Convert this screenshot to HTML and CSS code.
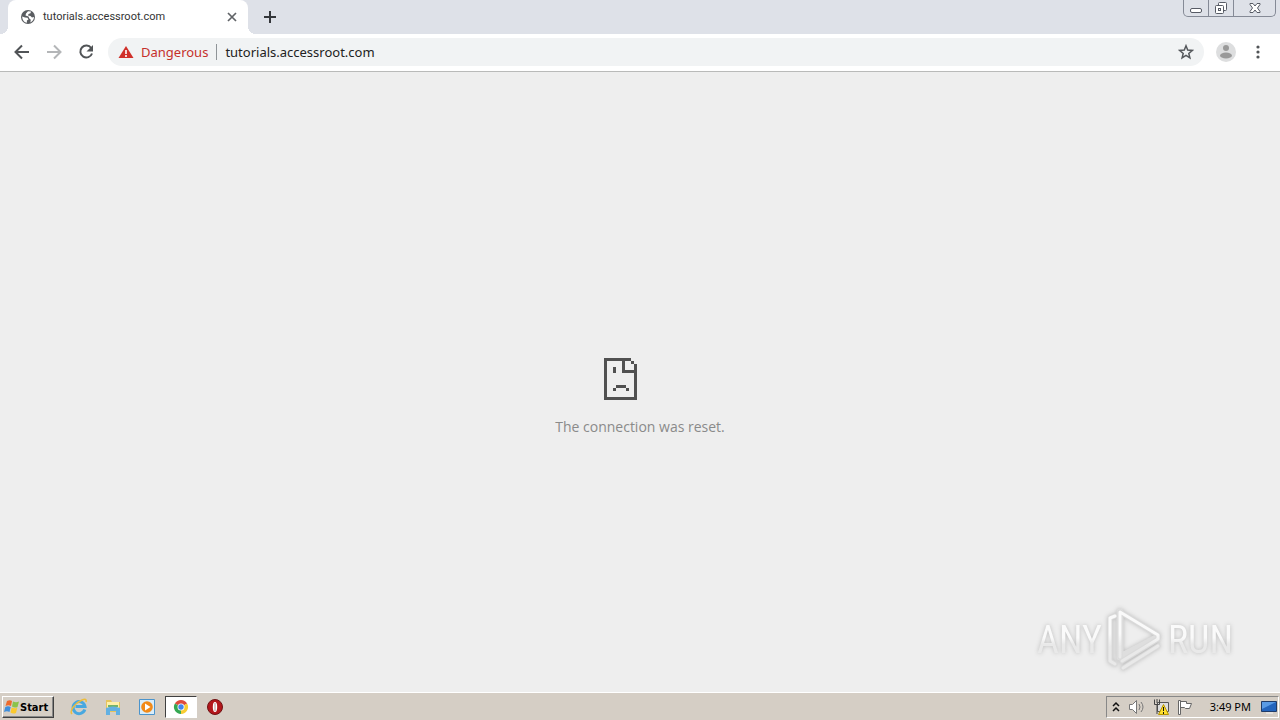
FILE: index.html
```html
<!DOCTYPE html>
<html lang="en">
<head>
<meta charset="utf-8">
<title>tutorials.accessroot.com</title>
<link rel="stylesheet" href="styles.css">
</head>
<body>
<header class="tabstrip">
  <div class="tab">
    <svg class="favicon" width="16" height="16" viewBox="0 0 16 16"><circle cx="8" cy="8" r="7" fill="#5a5d61"/><path d="M2.2 7.500 5 8.500l2.500.3 1 1.700-1.600 1v2.300C4.500 13.600 2.200 11 2.200 7.500zM8 2.200l3 .3-.5 1.700-2 .8-.5 1.500 2.500.4 1.500 1.500 2-.4c0 2.500-1.500 4.700-3.700 5.400l.5-2.600-1.500-1.300L8.500 7.600 5.500 6.500 6 4.500z" fill="#fff"/></svg>
    <span class="tab-title">tutorials.accessroot.com</span>
    <button class="icon-button tab-close" aria-label="Close tab"><svg width="16" height="16" viewBox="0 0 16 16"><path d="M4 4l8 8M12 4l-8 8" stroke="#606367" stroke-width="1.700"/></svg></button>
    <i class="flare flare-left"></i><i class="flare flare-right"></i>
  </div>
  <button class="icon-button new-tab" aria-label="New tab"><svg width="16" height="16" viewBox="0 0 16 16"><path d="M8 2v12M2 8h12" stroke="#34363a" stroke-width="2"/></svg></button>
  <div class="window-controls">
    <button class="win-button" aria-label="Minimize"><svg width="14" height="14" viewBox="0 0 14 14"><rect x="1.500" y="7.500" width="11" height="4" rx="1.500" fill="#fff" stroke="#575b65"/></svg></button>
    <button class="win-button" aria-label="Restore"><svg width="14" height="14" viewBox="0 0 14 14"><g fill="#fff" stroke="#575b65"><rect x="4.500" y="1.500" width="8" height="8" rx="1"/><rect x="1.500" y="4.500" width="8" height="8" rx="1"/><rect x="4.500" y="7.500" width="2" height="2"/></g></svg></button>
    <button class="win-button win-close" aria-label="Close"><svg width="14" height="14" viewBox="0 0 14 14"><path d="M2 2.500h3l2 2.500 2-2.500h3v1L9.500 7l2.500 3.500v1H9L7 9l-2 2.500H2v-1L4.500 7 2 3.500z" fill="#fff" stroke="#575b65"/></svg></button>
  </div>
</header>
<nav class="toolbar">
  <button class="icon-button nav-button" aria-label="Back"><svg width="18" height="18" viewBox="0 0 18 18"><path d="M16 9H3M9 2.500 2.500 9 9 15.500" fill="none" stroke="#515457" stroke-width="2"/></svg></button>
  <button class="icon-button nav-button" aria-label="Forward"><svg width="18" height="18" viewBox="0 0 18 18"><path d="M2 9h13M9 2.500 15.500 9 9 15.500" fill="none" stroke="#b4b6b8" stroke-width="2"/></svg></button>
  <button class="icon-button nav-button" aria-label="Reload"><svg width="18" height="18" viewBox="0 0 18 18"><path d="M14.200 5A6 6 0 1 0 15 10.500" fill="none" stroke="#515457" stroke-width="2"/><path d="M16 2v6.500H9.500z" fill="#515457"/></svg></button>
  <div class="omnibox">
    <button class="security"><svg width="16" height="16" viewBox="0 0 16 16"><path d="M8 2 15.500 14H.5z" fill="#d0302a"/><path d="M8 6v4M8 11v2" stroke="#fff" stroke-width="1.600"/></svg><span>Dangerous</span></button>
    <input class="address" type="text" aria-label="Address" value="tutorials.accessroot.com">
    <button class="icon-button" aria-label="Bookmark this page"><svg width="16" height="16" viewBox="0 0 16 16"><path d="m8 1.800 1.700 4.300 4.600.3-3.500 3 1.100 4.500L8 11.400l-3.900 2.500 1.100-4.500-3.500-3 4.600-.3z" fill="none" stroke="#55585c" stroke-width="1.500"/></svg></button>
  </div>
  <button class="icon-button profile" aria-label="Profile"><svg width="20" height="20" viewBox="0 0 20 20"><circle cx="10" cy="10" r="10" fill="#dddedf"/><circle cx="10" cy="6" r="3" fill="#999"/><ellipse cx="10" cy="13.500" rx="6" ry="3" fill="#999"/></svg></button>
  <button class="icon-button menu" aria-label="Menu"><svg width="16" height="16" viewBox="0 0 16 16" fill="#515457"><circle cx="8" cy="3" r="1.600"/><circle cx="8" cy="8" r="1.600"/><circle cx="8" cy="13" r="1.600"/></svg></button>
</nav>
<main class="page">
  <svg class="sad-page" width="72" height="42" viewBox="0 0 72 42" shape-rendering="crispEdges"><path fill="#505050" d="M0 0h27v3H3v36h27V15H18V3h3v9h9V6h3v36H0zM27 3h3v3h-3zM9 9h3v6H9zM12 27h10v3H12zM9 30h3v3H9zM22 30h3v3h-3z"/></svg>
  <p class="message">The connection was reset.</p>
  <div class="watermark">
    <span class="watermark-word">ANY</span>
    <svg width="58" height="64" viewBox="0 0 58 64"><defs><linearGradient id="sheen" x1="0" y1="0" x2="0" y2="64" gradientUnits="userSpaceOnUse"><stop offset=".4" stop-color="#fafafa"/><stop offset=".6" stop-color="#e9e9e9"/></linearGradient></defs><g fill="none" stroke-linejoin="round" stroke-linecap="round"><path d="M14 4v45l36-19" stroke="#dedede" stroke-width="7"/><path d="M9 8 4 10v43l5 3M14 49V4l38 23v4L16 53M17 60 52 38" stroke="#dadada" stroke-width="5"/><path d="M9 8 4 10v43l5 3M14 49V4l38 23v4L16 53M17 60 52 38" stroke="url(#sheen)" stroke-width="3"/></g></svg>
    <span class="watermark-word">RUN</span>
  </div>
</main>
<footer class="taskbar">
  <button class="start"><svg width="16" height="16" viewBox="0 0 16 16"><path d="M3 2q3-1.500 5 0L7 7Q4.500 5.500 1.500 7z" fill="#ed6a2c"/><path d="M9 2.500q3 1.500 6 0L13.500 8q-3 1.300-5.500-.5z" fill="#8bc34a"/><path d="M1.300 8Q4 6.700 6.700 8l-1.200 5Q3 11.500 0 13z" fill="#3f8edb"/><path d="M7.700 8.500q3 1.500 5.600.3L12 14q-3 1.300-5.500-.5z" fill="#fbc92e"/></svg><span>Start</span></button>
  <div class="launchers">
    <button class="launcher" aria-label="Internet Explorer"><svg width="18" height="18" viewBox="0 0 18 18"><path d="M14.800 11.500A6 6 0 1 1 15 8.500H5.500" fill="none" stroke="#48a8e0" stroke-width="3"/><path d="M2 16C-1 13 5 5 12 2q5-2 4 2" fill="none" stroke="#edbd3c" stroke-width="1.500"/></svg></button>
    <button class="launcher" aria-label="File Explorer"><svg width="18" height="18" viewBox="0 0 18 18"><path d="M2 2h5l1 2h8v10H2z" fill="#e6c45c"/><path d="M3 4h12v7H3z" fill="#fff0a8"/><path d="M4 7h10v2H4z" fill="#72b36b"/><path d="M2 10q7-3 14 0v7h-4v-4H6v4H2z" fill="#62b0e2"/></svg></button>
    <button class="launcher" aria-label="Media Player"><svg width="18" height="18" viewBox="0 0 18 18"><path d="M1.500 1.500h15v15h-15z" fill="#d9edfa" stroke="#4b94cc"/><circle cx="9" cy="9" r="5.800" fill="#f28a18"/><path d="m7 5.500 5.500 3.500L7 12.500z" fill="#fff"/></svg></button>
    <button class="launcher launcher-active" aria-label="Chrome"><svg width="16" height="16" viewBox="0 0 16 16"><path d="M8 8 1.900 4.500a7 7 0 0 1 12.200 0z" fill="#df4b3c"/><path d="M8 8 1.900 4.500A7 7 0 0 0 8 15z" fill="#35a852"/><path d="M8 8 14.100 4.500A7 7 0 0 1 8 15z" fill="#f8cc32"/><circle cx="8" cy="8" r="3.500" fill="#fff"/><circle cx="8" cy="8" r="2.700" fill="#4385ee"/></svg></button>
    <button class="launcher" aria-label="Opera"><svg width="18" height="18" viewBox="0 0 18 18"><circle cx="9" cy="9" r="7.500" fill="#b3161b" stroke="#6f1214"/><ellipse cx="9" cy="9" rx="2.200" ry="5" fill="#fff"/><path d="M9 5v8" stroke="#b79090"/></svg></button>
  </div>
  <div class="tray">
    <button class="icon-button" aria-label="Show hidden icons"><svg width="8" height="12" viewBox="0 0 8 12"><path d="m1 5 3-3 3 3M1 10l3-3 3 3" fill="none" stroke="#111" stroke-width="1.500"/></svg></button>
    <button class="icon-button speaker" aria-label="Volume"><svg width="18" height="16" viewBox="0 0 18 16"><path d="M1.500 5.500h3l4-4v13l-4-4h-3z" fill="#fff" stroke="#777"/><path d="M11 5q2 3 0 6M13 3q4 5 0 10" fill="none" stroke="#777"/></svg></button>
    <button class="icon-button network" aria-label="Network"><svg width="18" height="18" viewBox="0 0 18 18"><path d="M5.500 4.500h11v9h-11z" fill="#ddd" stroke="#555"/><path d="M2.500 1.500v5h5v-5M5 1v4M5 7v9" fill="none" stroke="#444"/><path d="m11.500 6.500 5 10h-10z" fill="#ffe02e" stroke="#b79500"/><path d="M11.500 9v4M11.500 14v2" stroke="#111"/></svg></button>
    <button class="icon-button flag" aria-label="Action Center"><svg width="18" height="18" viewBox="0 0 18 18"><path d="M2.500 2.500h2v14h-2zM4.500 3.500h6v2h5l-2 5h-4l-1-1h-4z" fill="#fff" stroke="#666"/></svg></button>
    <time class="clock">3:49 PM</time>
    <button class="icon-button" aria-label="Show desktop"><svg width="16" height="16" viewBox="0 0 16 16"><path d="M.5 2.500h15v10H.5z" fill="#2465bd" stroke="#203c69"/><path d="M1 3h14L1 10z" fill="#5a9be5"/><path d="M5 14h7" stroke="#f4f4f4"/></svg></button>
  </div>
</footer>
</body>
</html>
```
FILE: styles.css
```css
* { box-sizing: border-box; }
body { margin: 0; min-height: 100vh; display: flex; flex-direction: column; font-family: "Noto Sans", sans-serif; background: #eee; }
button, input { margin: 0; padding: 0; border: 0; background: none; font-family: inherit; color: inherit; }
svg { display: block; flex: none; }
.icon-button { display: flex; align-items: center; justify-content: center; flex: none; }
.tabstrip { height: 34px; display: flex; align-items: center; padding-left: 8px; background: #dee1e8; }
.tab { position: relative; width: 240px; height: 34px; display: flex; align-items: center; gap: 7px; padding: 0 8px 0 12px; background: #fff; border-radius: 8px 8px 0 0; }
.tab-title { flex: 1; font-family: Roboto, sans-serif; font-size: 11px; line-height: 16px; color: #333; }
.flare { position: absolute; bottom: 0; width: 8px; height: 8px; }
.flare-left { left: -8px; background: radial-gradient(circle at 0 0, transparent 8px, #fff 8px); }
.flare-right { right: -8px; background: radial-gradient(circle at 100% 0, transparent 8px, #fff 8px); }
.new-tab { margin-left: 14px; }
.window-controls { align-self: flex-start; display: flex; height: 17px; margin: 0 4px 0 auto; border: 1px solid #858a96; border-top: 0; border-radius: 0 0 5px 5px; }
.win-button { width: 25px; display: flex; justify-content: center; align-items: center; border-right: 1px solid #858a96; }
.win-close { width: 41px; border: 0; }
.toolbar { height: 38px; display: flex; align-items: center; padding: 0 14px 1px 6px; background: #fff; border-bottom: 1px solid #b9bab9; }
.nav-button { width: 32px; height: 32px; }
.omnibox { flex: 1; display: flex; align-items: center; height: 28px; margin-left: 6px; padding: 0 10px; background: #f1f3f4; border-radius: 14px; }
.security { display: flex; align-items: center; gap: 7px; padding-right: 8px; border-right: 1px solid #8f9498; font-size: 13px; line-height: 16px; color: #c5302b; }
.address { flex: 1; min-width: 0; padding-left: 8px; font-size: 13px; line-height: 20px; color: #222; }
.profile { margin-left: 12px; }
.menu { margin-left: 14px; }
.page { position: relative; flex: 1; display: flex; flex-direction: column; align-items: center; justify-content: center; gap: 16px; padding-top: 32px; background: #eee; }
.message { margin: 0; font-family: "Open Sans", sans-serif; font-size: 14px; line-height: 22px; color: #8a8a8a; }
.watermark { position: absolute; right: 47px; bottom: 20px; display: flex; align-items: center; gap: 4px; font: 38px "Liberation Sans Narrow", "Roboto Condensed", "Liberation Sans", sans-serif; filter: drop-shadow(0 0 2px #bbb); }
.watermark-word { color: transparent; background: linear-gradient(#fafafa 45%, #e9e9e9 60%); background-clip: text; -webkit-background-clip: text; }
.taskbar { height: 28px; display: flex; align-items: center; padding: 1px 1px 0 2px; background: #d5cec5; border-top: 1px solid #fff; color: #000; }
.start { display: flex; align-items: center; width: 52px; height: 22px; padding-left: 1px; border: 1px solid #fff; border-right-color: #404040; border-bottom-color: #404040; box-shadow: inset -1px -1px #888; font-family: "DejaVu Sans Condensed", "DejaVu Sans", sans-serif; font-size: 11px; font-weight: 700; }
.launchers { display: flex; gap: 2px; margin-left: 9px; }
.launcher { width: 32px; height: 22px; display: flex; align-items: center; justify-content: center; }
.launcher-active { background: #fff; border: 1px solid #fff; border-top-color: #404040; border-left-color: #404040; }
.tray { display: flex; align-items: center; height: 22px; margin-left: auto; padding: 0 1px 0 5px; border: 1px solid #fff; border-top-color: #888; border-left-color: #888; }
.speaker { margin-left: 8px; }
.network, .flag { margin-left: 6px; }
.clock { margin: 0 10px 0 16px; font-size: 11px; line-height: 16px; }
```
